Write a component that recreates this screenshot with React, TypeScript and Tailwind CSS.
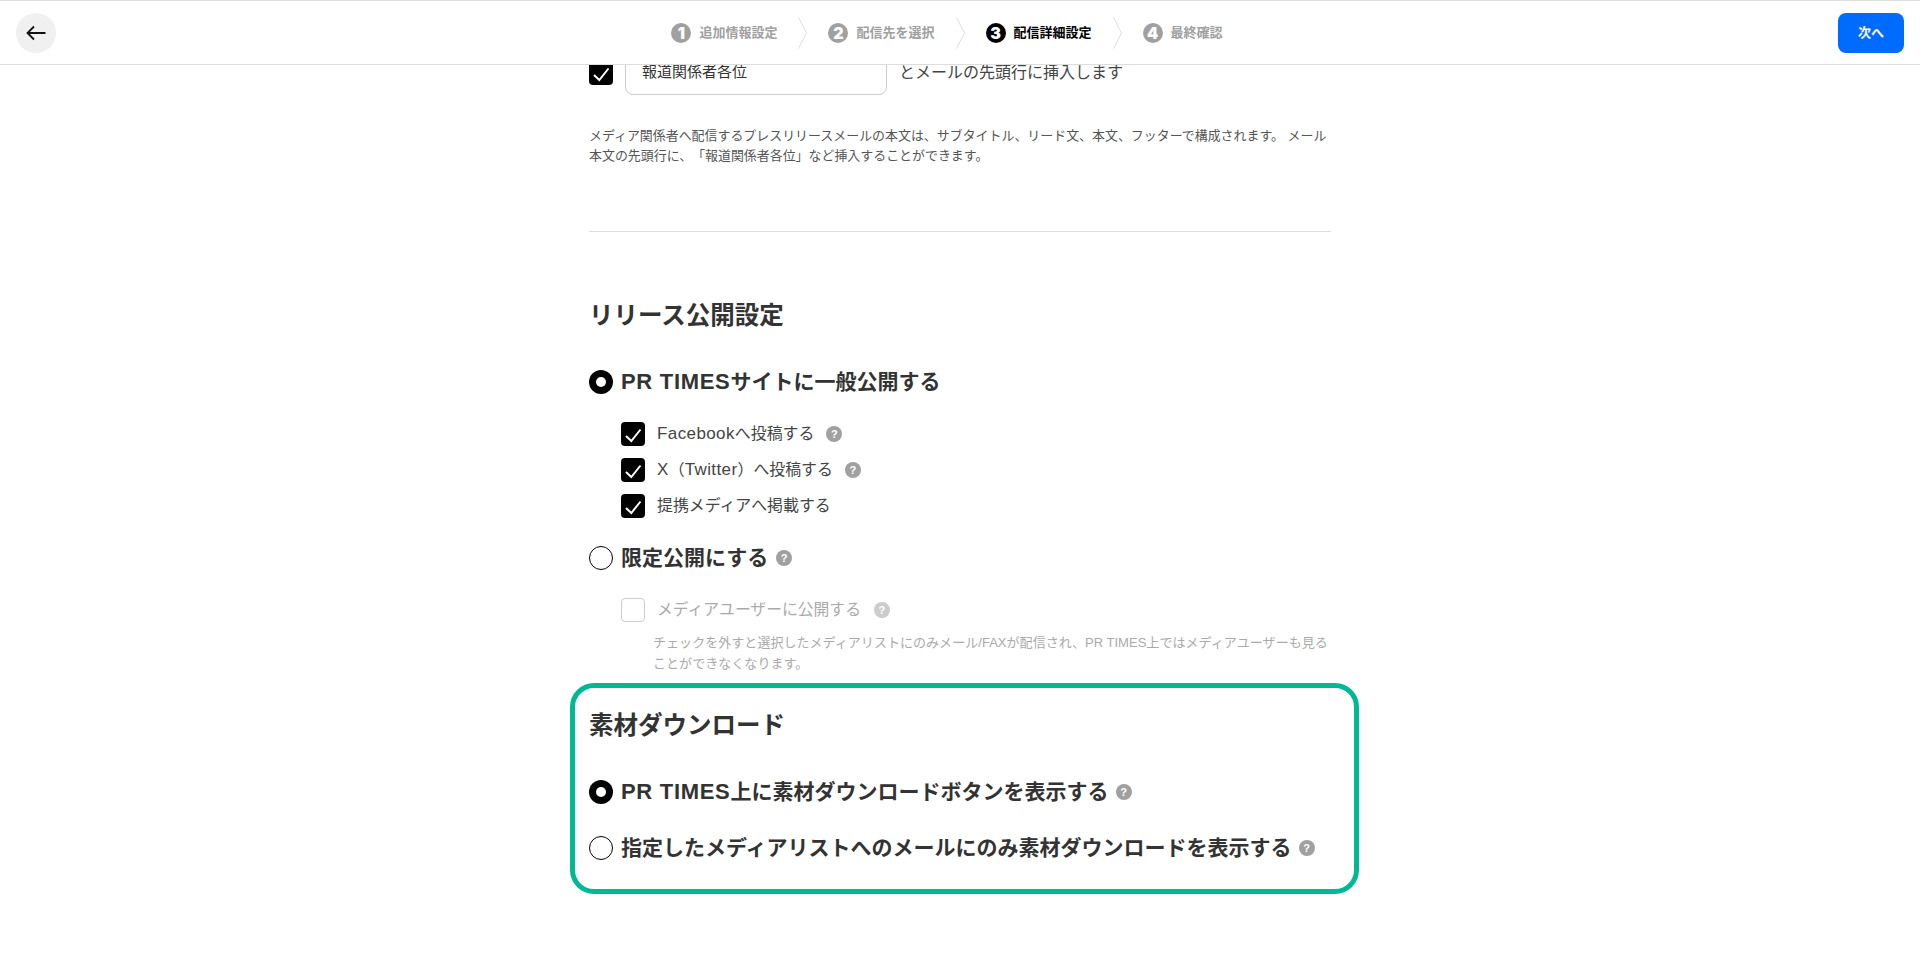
import type { ReactNode } from 'react';

const steps = [
  { num: 1, label: '追加情報設定', done: false },
  { num: 2, label: '配信先を選択', done: false },
  { num: 3, label: '配信詳細設定', done: true },
  { num: 4, label: '最終確認', done: false },
];

const StepChevron = () => (
  <svg width="9" height="32" viewBox="0 0 9 32" fill="none" className="mx-[21px] shrink-0">
    <path d="M0.5 0.5L8.5 16L0.5 31.5" stroke="#dddddd" strokeWidth="1" />
  </svg>
);

const Help = ({ muted = false }: { muted?: boolean }) => (
  <span
    className={`flex h-4 w-4 shrink-0 items-center justify-center rounded-full text-[11px] leading-none font-bold text-white ${
      muted ? 'bg-[#cccccc]' : 'bg-[#a0a0a0]'
    }`}
  >
    ?
  </span>
);

const CheckBox = ({ checked = true, className = '' }: { checked?: boolean; className?: string }) =>
  checked ? (
    <span className={`flex h-6 w-6 shrink-0 items-center justify-center rounded-[4px] bg-black ${className}`}>
      <svg width="24" height="24" viewBox="0 0 24 24" fill="none">
        <path d="M5 14L10.3 19L19.5 7.5" stroke="white" strokeWidth="2" />
      </svg>
    </span>
  ) : (
    <span className={`h-6 w-6 shrink-0 rounded-[4px] border border-[#cccccc] bg-white ${className}`} />
  );

const Radio = ({ checked = false }: { checked?: boolean }) =>
  checked ? (
    <span className="flex h-6 w-6 shrink-0 items-center justify-center rounded-full bg-black">
      <span className="h-[10px] w-[10px] rounded-full bg-white" />
    </span>
  ) : (
    <span className="h-6 w-6 shrink-0 rounded-full border border-black bg-white" />
  );

const Brand = () => <span className="text-[22px] tracking-[0.7px]">PR TIMES</span>;

const Latin = ({ children }: { children: ReactNode }) => (
  <span className="text-[17px] tracking-[0.4px]">{children}</span>
);

const RadioRow = ({ checked, children, help, gap, className = '' }: { checked?: boolean; children: ReactNode; help?: boolean; gap?: string; className?: string }) => (
  <div className={`flex h-6 items-center ${className}`}>
    <Radio checked={checked} />
    <span className="ml-2 text-[21px] leading-6 font-bold text-[#333333]">{children}</span>
    {help && <span className={gap}><Help /></span>}
  </div>
);

const CheckRow = ({ children, help, className = '' }: { children: ReactNode; help?: boolean; className?: string }) => (
  <div className={`ml-8 flex h-6 items-center ${className}`}>
    <CheckBox />
    <span className="ml-3 text-[15.9px] leading-6 text-[#444444]">{children}</span>
    {help && <span className="ml-3"><Help /></span>}
  </div>
);

export default function App() {
  return (
    <div className="h-[960px] w-[1920px] overflow-hidden bg-white font-['Liberation_Sans','Noto_Sans_CJK_JP',sans-serif] [text-spacing-trim:space-all]">
      {/* Header */}
      <header className="relative flex h-[65px] items-center justify-between border-y border-[#dddddd] px-4">
        <button className="flex h-10 w-10 items-center justify-center rounded-full bg-[#f0f0f0]">
          <svg width="20" height="20" viewBox="0 0 20 20" fill="none">
            <path d="M1.5 10H19.5M8 3.5L1.5 10L8 16.5" stroke="#111111" strokeWidth="1.8" />
          </svg>
        </button>
        <nav className="flex items-center">
          {steps.map((step, i) => (
            <div key={step.num} className="flex items-center">
              {i > 0 && <StepChevron />}
              <span
                className={`flex h-5 w-5 items-center justify-center rounded-full font-['Inter',sans-serif] text-[16px] leading-none font-black text-white ${
                  step.done ? 'bg-black' : 'bg-[#a0a0a0]'
                }`}
              >
                {step.num}
              </span>
              <span className={`ml-2 text-[13px] font-bold ${step.done ? 'text-black' : 'text-[#a0a0a0]'}`}>
                {step.label}
              </span>
            </div>
          ))}
        </nav>
        <button className="flex h-10 w-[66px] items-center justify-center rounded-lg bg-[#006cff] text-[13px] font-bold text-white">
          次へ
        </button>
      </header>

      {/* Content */}
      <main className="h-[895px] overflow-hidden">
        <div className="mx-auto w-[742px]">
          <div className="-mt-[18px] flex h-12 items-center">
            <CheckBox className="mt-1" />
            <div className="ml-3 flex h-12 w-[262px] items-center rounded-lg border border-[#cccccc] pt-[2px] pl-4 text-[15px] text-[#333333]">
              報道関係者各位
            </div>
            <span className="ml-3 pt-[3px] text-base text-[#444444]">とメールの先頭行に挿入します</span>
          </div>
          <p className="mt-[31px] text-[12.95px] leading-5 text-[#555555]">
            メディア関係者へ配信するプレスリリースメールの本文は、サブタイトル、リード文、本文、フッターで構成されます。
            メール本文の先頭行に、「報道関係者各位」など挿入することができます。
          </p>
          <div className="mt-[65px] h-px bg-[#dddddd]" />

          <h2 className="mt-[68px] text-[24.5px] leading-8 font-bold text-[#333333]">リリース公開設定</h2>
          <RadioRow checked className="mt-[38px]"><Brand />サイトに一般公開する</RadioRow>
          <CheckRow help className="mt-7"><Latin>Facebook</Latin>へ投稿する</CheckRow>
          <CheckRow help className="mt-3"><Latin>X</Latin>（<Latin>Twitter</Latin>）へ投稿する</CheckRow>
          <CheckRow className="mt-3">提携メディアへ掲載する</CheckRow>
          <RadioRow help gap="ml-2" className="mt-7">限定公開にする</RadioRow>

          <div className="mt-7 ml-8 flex h-6 items-center">
            <CheckBox checked={false} />
            <span className="ml-3 text-[15.8px] leading-6 text-[#aaaaaa]">メディアユーザーに公開する</span>
            <span className="ml-[13px]"><Help muted /></span>
          </div>
          <p className="mt-[10px] ml-[64px] w-[678px] text-[13.05px] leading-[21px] text-[#aaaaaa]">
            チェックを外すと選択したメディアリストにのみメール/FAXが配信され、PR TIMES上ではメディアユーザーも見ることができなくなります。
          </p>

          {/* Highlighted section */}
          <section className="mt-[9px] -ml-[19px] h-[211px] w-[789px] rounded-[24px] border-[5px] border-[#00b894] pt-[22px] pl-[14px]">
            <h2 className="text-[24.5px] leading-8 font-bold text-[#333333]">素材ダウンロード</h2>
            <RadioRow checked help gap="ml-[7px]" className="mt-[38px]"><Brand />上に素材ダウンロードボタンを表示する</RadioRow>
            <RadioRow help gap="ml-[7px]" className="mt-8">指定したメディアリストへのメールにのみ素材ダウンロードを表示する</RadioRow>
          </section>
        </div>
      </main>
    </div>
  );
}
